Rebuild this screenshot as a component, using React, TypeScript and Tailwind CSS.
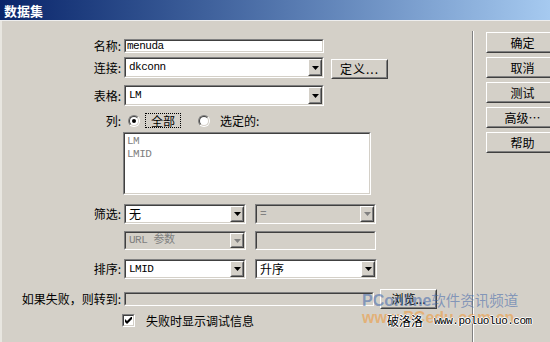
import type { ReactNode } from "react";

const cjk = "font-['Noto_Sans_CJK_SC','Noto_Sans',sans-serif] text-[12px]";
const mono = "font-['Liberation_Mono','Noto_Sans_CJK_SC',monospace] text-[11px] tracking-[-0.5px]";

function Sunken({ className = "", inner = "", children }: { className?: string; inner?: string; children?: ReactNode }) {
  return (
    <div className={`border border-t-[#808080] border-l-[#808080] border-b-white border-r-white ${className}`}>
      <div className={`h-full w-full border border-t-[#404040] border-l-[#404040] border-b-[#d4d0c8] border-r-[#d4d0c8] ${inner}`}>
        {children}
      </div>
    </div>
  );
}

function Raised({ className = "", children }: { className?: string; children?: ReactNode }) {
  return (
    <div className={`shrink-0 border border-t-white border-l-white border-b-[#404040] border-r-[#404040] bg-[#d4d0c8] ${className}`}>
      <div className="flex h-full w-full items-center justify-center border border-t-[#d4d0c8] border-l-[#d4d0c8] border-b-[#808080] border-r-[#808080]">
        {children}
      </div>
    </div>
  );
}

function Arrow({ disabled }: { disabled?: boolean }) {
  return (
    <svg width="7" height="4" viewBox="0 0 7 4">
      <path d="M0 0h7L3.5 4z" fill={disabled ? "#808080" : "#000"} />
    </svg>
  );
}

function Select({
  className = "",
  value,
  disabled,
  font = mono,
}: {
  className?: string;
  value: string;
  disabled?: boolean;
  font?: string;
}) {
  return (
    <Sunken className={className} inner={disabled ? "bg-[#d4d0c8]" : "bg-white"}>
      <div className="flex h-full items-center">
        <span className={`flex-1 pl-[3px] leading-none ${font} ${disabled ? "text-[#808080]" : "text-black"}`}>{value}</span>
        <Raised className="h-full w-[14px]">
          <Arrow disabled={disabled} />
        </Raised>
      </div>
    </Sunken>
  );
}

function Label({ children, className = "" }: { children: ReactNode; className?: string }) {
  return <div className={`w-[120px] shrink-0 pr-[1px] text-right leading-none text-black ${cjk} ${className}`}>{children}</div>;
}

function Radio({ checked }: { checked?: boolean }) {
  return (
    <div className="h-[12px] w-[12px] shrink-0 rounded-full border border-t-[#808080] border-l-[#808080] border-b-white border-r-white">
      <div className="flex h-full w-full items-center justify-center rounded-full border border-t-[#404040] border-l-[#404040] border-b-[#d4d0c8] border-r-[#d4d0c8] bg-white">
        {checked && <div className="h-[4px] w-[4px] rounded-full bg-black" />}
      </div>
    </div>
  );
}

export default function App() {
  return (
    <div className="relative h-[342px] w-[550px] overflow-hidden bg-[#d4d0c8]">
      <div className="flex h-[20px] items-center bg-linear-to-r from-[#0a246a] to-[#a6caf0] pl-[4px]">
        <span className="font-['Noto_Sans_CJK_SC',sans-serif] text-[13px] font-bold leading-none text-white">数据集</span>
      </div>
      <div className="flex h-[322px] border-t border-t-[#eeeeee]">
        <div className="flex w-[472px] shrink-0 flex-col border-l-[2px] border-l-[#e8e6e0]">
          {/* 名称 */}
          <div className="mt-[18px] flex h-[14px] items-center">
            <Label className="w-[117px]">名称:</Label>
            <Sunken className="ml-[2px] h-[14px] w-[200px]" inner="bg-white flex items-center">
              <span className={`pl-[1px] leading-none ${mono}`}>menuda</span>
            </Sunken>
          </div>
          {/* 连接 */}
          <div className="mt-[4px] flex h-[21px] items-center">
            <Label className="w-[117px]">连接:</Label>
            <Select className="ml-[2px] h-[21px] w-[200px]" value="dkconn" />
            <Raised className="ml-[7px] mt-[3px] h-[20px] w-[57px]">
              <span className={`${cjk} leading-none tracking-[1px]`}>定义...</span>
            </Raised>
          </div>
          {/* 表格 */}
          <div className="mt-[7px] flex h-[21px] items-center">
            <Label className="w-[117px]">表格:</Label>
            <Select className="ml-[2px] h-[21px] w-[200px]" value="LM" />
          </div>
          {/* 列 */}
          <div className="mt-[7px] flex h-[15px] items-center">
            <Label className="w-[115px]">列:</Label>
            <div className="ml-[6px]">
              <Radio checked />
            </div>
            <div className="ml-[5px] flex h-[15px] w-[36px] items-center justify-center border border-dotted border-black">
              <span className={`${cjk} leading-none`}>全部</span>
            </div>
            <div className="ml-[17px]">
              <Radio />
            </div>
            <span className={`ml-[10px] ${cjk} leading-none`}>选定的:</span>
          </div>
          {/* list */}
          <div className="mt-[4px] flex h-[63px]">
            <Sunken className="ml-[121px] h-[63px] w-[248px]" inner="bg-white pl-[2px] pt-[1px]">
              <div className={`${mono} leading-[13px] text-[#808080]`}>LM</div>
              <div className={`${mono} leading-[13px] text-[#808080]`}>LMID</div>
            </Sunken>
          </div>
          {/* 筛选 */}
          <div className="mt-[9px] flex h-[20px] items-center">
            <Label>筛选:</Label>
            <Select className="ml-[2px] h-[20px] w-[122px]" value="无" font={cjk} />
            <Select className="ml-[9px] h-[20px] w-[121px]" value="=" disabled />
          </div>
          {/* URL 参数 */}
          <div className="mt-[7px] flex h-[19px] items-center">
            <div className="w-[120px] shrink-0" />
            <Select className="ml-[2px] h-[19px] w-[122px]" value="URL 参数" disabled />
            <Sunken className="ml-[9px] h-[19px] w-[121px]" inner="bg-[#d4d0c8]" />
          </div>
          {/* 排序 */}
          <div className="mt-[9px] flex h-[20px] items-center">
            <Label>排序:</Label>
            <Select className="ml-[2px] h-[20px] w-[122px]" value="LMID" />
            <Select className="ml-[9px] h-[20px] w-[122px]" value="升序" font={cjk} />
          </div>
          {/* 如果失败 */}
          <div className="mt-[10px] flex h-[20px] items-center">
            <Label>如果失败，则转到:</Label>
            <Sunken className="ml-[2px] h-[14px] w-[250px]" inner="bg-[#d4d0c8]" />
            <Raised className="ml-[6px] h-[20px] w-[57px]">
              <span className={`${cjk} leading-none`}>浏览...</span>
            </Raised>
          </div>
          {/* checkbox */}
          <div className="mt-[5px] flex h-[13px] items-center">
            <Sunken className="ml-[120px] h-[13px] w-[13px]" inner="bg-white flex items-center justify-center">
              <svg width="7" height="7" viewBox="0 0 7 7">
                <path d="M0 2v3l2 2 5-5V-1L2 4z" fill="#000" />
              </svg>
            </Sunken>
            <span className={`ml-[11px] ${cjk} leading-none`}>失败时显示调试信息</span>
          </div>
        </div>
        {/* separator */}
        <div className="mt-[10px] w-[2px] shrink-0 border-l border-r border-l-[#808080] border-r-white" />
        {/* buttons */}
        <div className="ml-[12px] flex flex-col gap-[4px] pt-[11px]">
          {["确定", "取消", "测试", "高级…", "帮助"].map((t) => (
            <Raised key={t} className="h-[21px] w-[73px]">
              <span className={`${cjk} leading-none`}>{t}</span>
            </Raised>
          ))}
        </div>
      </div>
      {/* watermark */}
      <div className="pointer-events-none absolute left-[362px] top-[293px] flex items-baseline whitespace-nowrap leading-none text-[#3c64aa]/55">
        <span className="font-['Liberation_Sans',sans-serif] text-[16px] font-bold">PConline</span>
        <span className="font-['Noto_Sans_CJK_SC',sans-serif] text-[14.5px]">软件资讯频道</span>
      </div>
      <div className="pointer-events-none absolute left-[362px] top-[310px] whitespace-nowrap font-['Liberation_Sans',sans-serif] text-[16px] font-bold leading-none text-[#f09632]/55">
        www.PCedu.com.cn
      </div>
      <div className="pointer-events-none absolute left-[387px] top-[315px] flex items-center whitespace-nowrap leading-none text-black [text-shadow:1px_0_0_#fff,-1px_0_0_#fff,0_1px_0_#fff,0_-1px_0_#fff]">
        <span className={cjk}>破洛洛</span>
        <span className={`ml-[11px] ${mono} tracking-[-0.4px]`}>www.poluoluo.com</span>
      </div>
    </div>
  );
}
